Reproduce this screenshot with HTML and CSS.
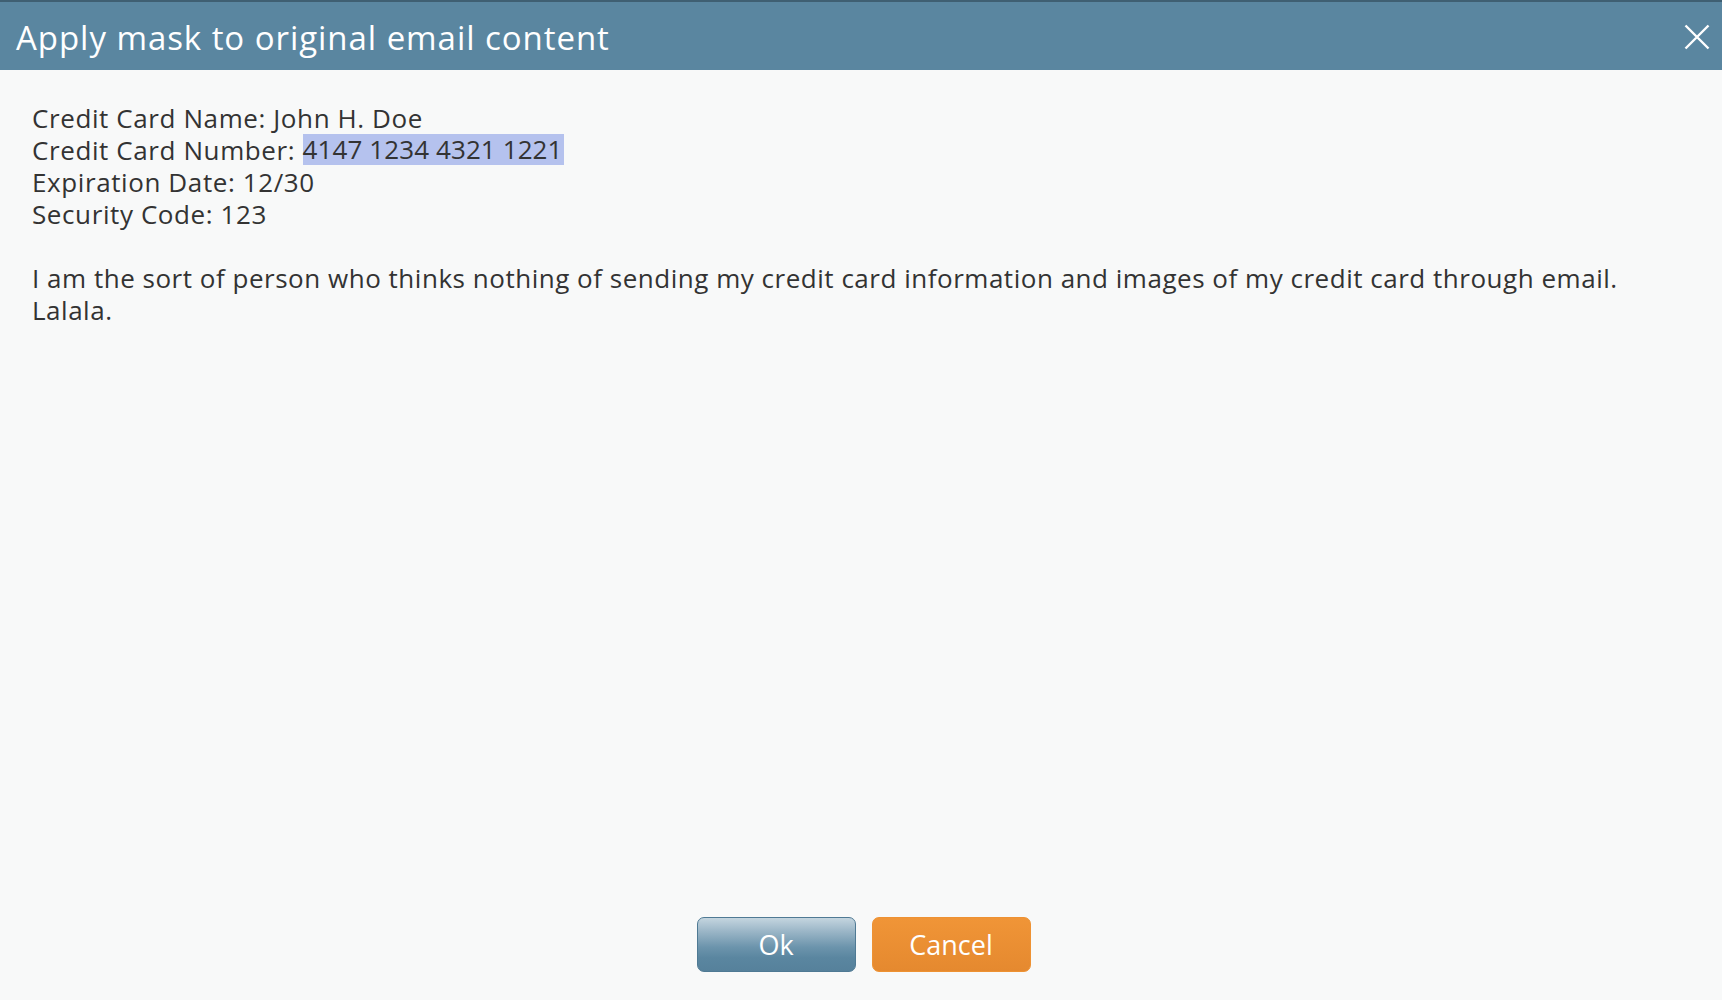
FILE: index.html
```html
<!DOCTYPE html>
<html>
<head>
<meta charset="utf-8">
<link rel="stylesheet" href="styles.css">
</head>
<body>
<div class="dialog">
  <div class="header">
    <div class="title">Apply mask to original email content</div>
    <div class="close">
      <svg width="26" height="26" viewBox="0 0 26 26"><path d="M1.5 1.5 L24.5 24.5 M24.5 1.5 L1.5 24.5" stroke="#fff" stroke-width="2.4" fill="none"/></svg>
    </div>
  </div>
  <div class="content">
    <div class="line">Credit Card Name: John H. Doe</div>
    <div class="line">Credit Card Number: <span class="mark">4147 1234 4321 1221</span></div>
    <div class="line">Expiration Date: 12/30</div>
    <div class="line">Security Code: 123</div>
    <div class="blank"></div>
    <div class="para">I am the sort of person who thinks nothing of sending my credit card information and images of my credit card through email. Lalala.</div>
  </div>
  <div class="footer">
    <button class="btn ok">Ok</button>
    <button class="btn cancel">Cancel</button>
  </div>
</div>
</body>
</html>
```
FILE: styles.css
```css
html, body {
  margin: 0;
  padding: 0;
  height: 100%;
  background: #f8f9f9;
}
.dialog {
  display: flex;
  flex-direction: column;
  height: 1000px;
  font-family: "Open Sans", "Liberation Sans", sans-serif;
  color: #333;
}
.header {
  display: flex;
  align-items: center;
  justify-content: space-between;
  height: 68px;
  border-top: 2px solid #3f5f72;
  background: #5a86a0;
  padding: 0 12px 0 16px;
}
.title {
  color: #fff;
  font-size: 33px;
  letter-spacing: 0.95px;
  line-height: 1;
  padding-top: 2px;
}
.close {
  display: flex;
  width: 26px;
  height: 26px;
  margin-top: 2px;
}
.content {
  flex: 1;
  padding: 32px 30px 0 32px;
  font-size: 26px;
  letter-spacing: 0.6px;
  line-height: 32px;
}
.line {
  height: 32px;
}
.mark {
  display: inline-block;
  vertical-align: top;
  line-height: 31px;
  letter-spacing: 0.1px;
  background: #b5c2ee;
  padding: 0 1px 0 0;
}
.blank {
  height: 32px;
}
.para {
  letter-spacing: 0.52px;
}
.footer {
  display: flex;
  justify-content: center;
  gap: 16px;
  padding: 0 0 28px 5px;
}
.btn {
  width: 159px;
  height: 55px;
  border-radius: 7px;
  font-family: "Open Sans", "Liberation Sans", sans-serif;
  font-size: 27px;
  color: #fff;
  padding: 0;
}
.ok {
  border: 1px solid #4f7a94;
  background: linear-gradient(to bottom, #c4d5df 0%, #9bb6c7 25%, #6c94ac 55%, #5a86a0 75%, #56819b 100%);
}
.cancel {
  border: 1px solid #ee9233;
  background: linear-gradient(to bottom, #f09537 0%, #e5892f 100%);
}
```
